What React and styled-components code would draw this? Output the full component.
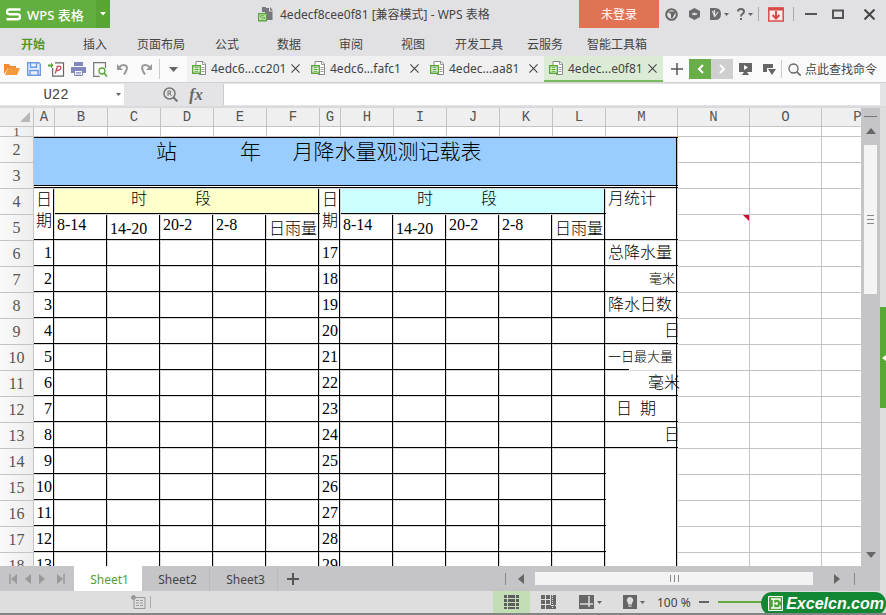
import React from "react";
import styled, { createGlobalStyle, css } from "styled-components";

const UI_FONT = `"Noto Sans", "Noto Sans CJK SC", sans-serif`;
const CELL_FONT = `"Liberation Serif", "Noto Sans CJK SC", serif`;
const MONO_FONT = `"Liberation Mono", monospace`;

const GlobalStyle = createGlobalStyle`
    * {
        box-sizing: border-box;
    }
    body {
        margin: 0;
        overflow: hidden;
        font-family: ${UI_FONT};
        font-size: 12px;
        color: #444;
    }
    button, input {
        margin: 0;
        padding: 0;
        border: 0;
        font: inherit;
        color: inherit;
        background: none;
    }
    svg {
        display: block;
        flex: none;
    }
`;

const Window = styled.div`
    position: relative;
    display: flex;
    flex-direction: column;
    height: 100vh;
    overflow: hidden;
    background: #e1e1e3;
    border-bottom: 2px solid #858585;
`;

const IconButton = styled.button`
    display: flex;
    align-items: center;
    justify-content: center;
    gap: 3px;
    flex: none;
    width: ${({ $width }) => $width || 22}px;
    height: ${({ $height }) => $height || 22}px;
    color: #666;
`;

const Separator = styled.span`
    flex: none;
    width: 1px;
    height: ${({ $height }) => $height || 14}px;
    margin: 0 ${({ $space }) => $space || 0}px;
    background: ${({ $color }) => $color || "#aaa"};
`;

/* title bar */

const TitleBar = styled.header`
    display: flex;
    align-items: center;
    flex: none;
    height: 28px;
`;

const AppButton = styled.button`
    display: flex;
    align-items: center;
    gap: 6px;
    width: 96px;
    height: 28px;
    padding-left: 6px;
    background: #62ae3e;
    color: #fff;
    font-size: 13px;
    font-weight: 500;
    white-space: nowrap;
`;

const AppMenuButton = styled(AppButton)`
    justify-content: center;
    width: 14px;
    padding: 0;
    background: #58a535;
`;

const DocumentTitle = styled.h1`
    display: flex;
    align-items: center;
    gap: 7px;
    flex: 1;
    margin: 0;
    padding-left: 148px;
    font-size: 12px;
    font-weight: 400;
    white-space: nowrap;
`;

const LoginButton = styled.button`
    width: 80px;
    height: 28px;
    background: #e07354;
    color: #fff;
`;

const WindowTools = styled.div`
    display: flex;
    align-items: center;
    width: 227px;
`;

/* ribbon menu */

const Menu = styled.nav`
    display: flex;
    flex: none;
    height: 28px;
    padding: 0 2px;
`;

const MenuItem = styled.button`
    min-width: 62px;
    height: 32px;
    padding: 0 11px;
    white-space: nowrap;
    color: ${({ $active }) => ($active ? "#4c9a2a" : "#444")};
    font-weight: ${({ $active }) => ($active ? 700 : 400)};
`;

/* quick access and file tabs */

const Toolbar = styled.div`
    display: flex;
    align-items: center;
    flex: none;
    height: 26px;
    background: #fafafa;
`;

const QuickAccess = styled.div`
    display: flex;
    align-items: center;
    flex: none;
    width: 187px;
    padding-left: 1px;
`;

const FileTabs = styled.div`
    display: flex;
    flex: 1;
    min-width: 0;
    height: 26px;
`;

const FileTab = styled.div`
    display: flex;
    align-items: center;
    flex: 1;
    min-width: 0;
    padding: 0 5px;
    background: ${({ $active }) => ($active ? "#dcebd6" : "#f0f0f0")};
    border-bottom: 2px solid ${({ $active }) => ($active ? "#7ab861" : "#f0f0f0")};
`;

const FileTabName = styled.button`
    display: flex;
    align-items: center;
    gap: 4px;
    flex: 1;
    min-width: 0;
    white-space: nowrap;
`;

const CloseTab = styled.button`
    flex: none;
    width: 10px;
    height: 14px;
`;

const TabTools = styled.div`
    display: flex;
    align-items: center;
    flex: none;
    width: 223px;
    padding-left: 2px;
`;

const ScrollTabs = styled.button`
    display: flex;
    align-items: center;
    justify-content: center;
    width: 22px;
    height: 20px;
    background: ${({ $active }) => ($active ? "#68ae49" : "#cfcfcf")};
`;

const FindCommand = styled.button`
    display: flex;
    align-items: center;
    gap: 4px;
    margin-left: 6px;
    white-space: nowrap;
`;

/* formula bar */

const FormulaBar = styled.div`
    display: flex;
    align-items: center;
    flex: none;
    height: 26px;
    padding-right: 6px;
    background: #e4e4e6;
    border-top: 1px solid #d2d2d4;
    border-bottom: 2px solid #dadadc;
`;

const NameBox = styled.div`
    display: flex;
    align-items: center;
    width: 124px;
    height: 21px;
    background: #fff;
`;

const NameInput = styled.input`
    flex: 1;
    min-width: 0;
    text-align: center;
    font-family: ${MONO_FONT};
    font-size: 14px;
`;

const FormulaTools = styled.div`
    display: flex;
    align-items: center;
    justify-content: flex-end;
    gap: 4px;
    width: 99px;
    padding-right: 16px;
`;

const FormulaInput = styled.input`
    flex: 1;
    min-width: 0;
    height: 21px;
    padding: 0 6px;
    background: #fff;
    border-left: 1px solid #ccc;
`;

/* sheet */

const Workspace = styled.main`
    display: flex;
    flex: 1;
    min-height: 0;
`;

const SheetViewport = styled.div`
    flex: 1;
    min-width: 0;
    overflow: hidden;
    background: #fff;
`;

const Sheet = styled.table`
    table-layout: fixed;
    width: 894px;
    border-collapse: separate;
    border-spacing: 0;
    font-family: ${CELL_FONT};
    color: #000;
`;

const Row = styled.tr`
    height: ${({ $height }) => $height || 26}px;
`;

const header = css`
    padding: 0;
    overflow: hidden;
    font-weight: 400;
    color: #555;
    border-right: 1px solid #c4c4c4;
    border-bottom: 1px solid #c4c4c4;
`;

const ColumnHeader = styled.th`
    ${header}
    background: #efefef;
    font-family: ${MONO_FONT};
    font-size: 14px;
    line-height: 16px;
`;

const RowHeader = styled.th`
    ${header}
    background: linear-gradient(to right, #fafafa, #ededed);
    font-size: ${({ $short }) => ($short ? 13 : 16)}px;
    line-height: ${({ $short }) => ($short ? 9 : 25)}px;
`;

const Cell = styled.td`
    position: relative;
    padding: 0;
    border-right: 1px solid #c4c4c4;
    border-bottom: 1px solid #c4c4c4;
`;

const black = "linear-gradient(#000, #000)";
const grey = "linear-gradient(#d8d8d8, #d8d8d8)";

/* table cells carry a black rule just inside the grid line */
const RuledCell = styled.td`
    padding: 0 3px 2px 2px;
    background:
        ${black} right 1px top / 1px 100% no-repeat,
        ${black} left bottom 1px / ${({ $rule }) => $rule || "100%"} 1px no-repeat,
        ${grey} right top / 1px 100% no-repeat,
        ${grey} left bottom / 100% 1px no-repeat,
        ${({ $fill }) => $fill || "#fff"};
    font-size: ${({ $size }) => $size || 16}px;
    font-weight: 300;
    line-height: 20px;
    white-space: pre;
    text-align: ${({ $align }) => $align || "left"};
    vertical-align: ${({ $valign }) => $valign || "middle"};
`;

const TitleCell = styled(RuledCell)`
    line-height: 30px;
    box-shadow: inset 0 1px 0 #000;
    background:
        ${black} right 1px top / 1px 100% no-repeat,
        ${black} left bottom 1px / 100% 1px no-repeat,
        linear-gradient(#fff, #fff) left bottom 2px / 100% 1px no-repeat,
        ${black} left bottom 3px / 100% 1px no-repeat,
        linear-gradient(#d8d8d8, #d8d8d8) left bottom / 100% 1px no-repeat,
        #99ccff;
`;

const DateCell = styled(RuledCell)`
    line-height: 21px;
    white-space: normal;
    word-break: break-all;
`;

const CommentMark = styled.span`
    position: absolute;
    top: 0;
    right: 0;
    border-top: 6px solid #c8102e;
    border-left: 6px solid transparent;
`;

const Corner = styled.span`
    display: block;
    width: 0;
    margin-left: 20px;
    border-bottom: 10px solid #b8b8b8;
    border-left: 10px solid transparent;
`;

const VerticalScroll = styled.div`
    display: flex;
    flex-direction: column;
    align-items: center;
    flex: none;
    width: 19px;
    padding: 8px 0 0;
    background: #c5c5c7;
`;

const SplitHandle = styled.span`
    flex: none;
    width: 13px;
    height: 1px;
    background: #777;
`;

const ScrollSpace = styled.div`
    flex: 1;
    width: 13px;
`;

const VerticalThumb = styled.div`
    display: flex;
    flex-direction: column;
    align-items: center;
    justify-content: center;
    gap: 3px;
    width: 13px;
    height: 33%;
    min-height: 40px;
    background: #f4f4f4;
`;

const Grip = styled.span`
    width: ${({ $vertical }) => ($vertical ? 1 : 7)}px;
    height: ${({ $vertical }) => ($vertical ? 7 : 1)}px;
    background: #888;
`;

const SidePane = styled.div`
    display: flex;
    flex-direction: column;
    justify-content: center;
    flex: none;
    width: 6px;
    padding-top: 41px;
    background: #dededf;
`;

const SidePaneButton = styled.button`
    display: flex;
    align-items: center;
    justify-content: flex-end;
    width: 6px;
    height: 101px;
    background: #59a735;
`;

/* sheet tabs */

const SheetBar = styled.div`
    display: flex;
    align-items: center;
    flex: none;
    height: 25px;
    padding-right: 19px;
    background: #c5c5c7;
    border-right: 6px solid #dededf;
`;

const SheetNav = styled.div`
    display: flex;
    align-items: center;
    width: 74px;
    padding-left: 4px;
`;

const SheetTab = styled.button`
    width: 68px;
    height: 25px;
    padding: 2px 0 0 4px;
    background: ${({ $active }) => ($active ? "#fff" : "transparent")};
    color: ${({ $active }) => ($active ? "#55a02f" : "#444")};
    border-right: 1px solid ${({ $active }) => ($active ? "#fff" : "#b9b9bb")};
`;

const HorizontalScroll = styled.div`
    display: flex;
    align-items: center;
    flex: 1;
    min-width: 0;
    margin-left: 197px;
`;

const HorizontalThumb = styled.div`
    display: flex;
    align-items: center;
    justify-content: center;
    gap: 3px;
    flex: 1;
    height: 13px;
    margin-right: 13px;
    background: #f3f3f3;
`;

/* status bar */

const StatusBar = styled.footer`
    display: flex;
    align-items: center;
    flex: none;
    height: 22px;
    background: #dededf;
`;

const StatusInfo = styled.div`
    display: flex;
    align-items: center;
    gap: 4px;
    flex: 1;
    padding-left: 131px;
`;

const ViewButton = styled(IconButton)`
    background: ${({ $active }) => ($active ? "#c3deb5" : "transparent")};
`;

const ZoomLabel = styled.span`
    width: 42px;
    padding-left: 2px;
    white-space: nowrap;
`;

const ZoomSlider = styled.input`
    appearance: none;
    width: 112px;
    height: 2px;
    margin: 0 56px 0 7px;
    background: #62a83c;

    &::-webkit-slider-thumb {
        appearance: none;
        width: 7px;
        height: 12px;
        background: #666;
    }
`;

const SiteBadge = styled.a`
    position: absolute;
    right: 0;
    bottom: -2px;
    display: flex;
    align-items: center;
    gap: 3px;
    height: 23px;
    padding: 0 2px 0 7px;
    border-radius: 11px;
    background: #128733;
    color: #fff;
    font-family: "Liberation Sans", sans-serif;
    font-size: 16px;
    font-weight: 700;
    font-style: italic;
    text-decoration: none;
`;

const Caret = ({ color = "#666", size = 5 }) => (
    <svg width={size} height={(size + 1) / 2} viewBox="0 0 10 6" preserveAspectRatio="none">
        <path d="M0 0h10L5 6z" fill={color} />
    </svg>
);

const Triangle = ({ dir, color = "#666", bar }) => (
    <svg width="10" height="10" viewBox="0 0 10 10">
        <g transform={`rotate(${{ right: 0, down: 90, left: 180, up: 270 }[dir]} 5 5)`}>
            <path d={bar ? "M1 0l6 5-6 5z" : "M2 0l6 5-6 5z"} fill={color} />
            {bar && <path d="M8 0v10" stroke={color} strokeWidth="1.5" />}
        </g>
    </svg>
);

const Cross = ({ size = 9, width = 1.2 }) => (
    <svg width={size} height={size} viewBox="0 0 10 10">
        <path d="M.5.5l9 9M9.5.5l-9 9" stroke="#444" strokeWidth={width} />
    </svg>
);

const Plus = ({ width = 1.5 }) => (
    <svg width="12" height="12" viewBox="0 0 12 12">
        <path d="M6 0v12M0 6h12" stroke="#555" strokeWidth={width} />
    </svg>
);

const FileIcon = () => (
    <svg width="15" height="14" viewBox="0 0 15 14" fill="none">
        <path d="M4 4V.5h7L13.500 3v10.500H7" fill="#fff" stroke="#888" />
        <path d="M10.500 1v2.500h3M7 4.500h2M9.500 6.500h3M9.500 8.500h3M9.500 10.500h3" stroke="#999" />
        <path d="M.7 4.700h7.600v7.600H.7z" fill="#f2faee" stroke="#5aa63a" strokeWidth="1.400" />
        <path d="M2.500 6.700h4M2.500 8.500h4M2.500 10.300h4" stroke="#5aa63a" />
    </svg>
);

const BookIcon = () => (
    <svg width="15" height="15" viewBox="0 0 15 15" fill="none">
        <path d="M4 0h4v4h3v9H9V5H4z" fill="#77777b" />
        <path d="M7 1h4v3.500h3.500V13H9V6H7z" fill="#77777b" />
        <path d="M12 0l3 3.500h-3z" fill="#77777b" />
        <path d="M.7 6.700h7.600v7H.7z" fill="#eef7ea" stroke="#5aa63a" strokeWidth="1.400" />
        <path d="M6.500 8.700h-4v1.500h4v1.700h-4" stroke="#5aa63a" />
    </svg>
);

const WpsLogo = () => (
    <svg width="15" height="13" viewBox="0 0 15 13" fill="none">
        <path
            d="M14.500 1.500H3.500Q1 1.500 1 3.800T3.500 6.200h8Q14 6.200 14 8.700t-2.500 2.500H.5"
            stroke="#fff"
            strokeWidth="2.400"
        />
    </svg>
);

const OpenIcon = () => (
    <svg width="16" height="12" viewBox="0 0 16 12">
        <path d="M0 11V1h5l1.500 2H12v2H4z" fill="#ef8b35" />
        <path d="M4 5h12l-3 7H1z" fill="#f59a3c" />
    </svg>
);

const SaveIcon = () => (
    <svg width="14" height="14" viewBox="0 0 14 14" fill="none" stroke="#6d9be0" strokeWidth="1.400">
        <path d="M.7.7h11l1.600 1.600v11H.7z" fill="#e9f1fd" />
        <path d="M3.500.7v4.500h6V.7M3 13V8.500h8V13" />
    </svg>
);

const PdfIcon = () => (
    <svg width="17" height="15" viewBox="0 0 17 15" fill="none">
        <path d="M7 .8h8.500v13.400H4.700V6" fill="#fff" stroke="#666" strokeWidth="1.200" />
        <path d="M7.300 11.500l2-7q3.700-1 3.500 1.500T8.700 8.500" stroke="#c44a5c" strokeWidth="1.300" />
        <path d="M0 2.500h3V.500l2.500 3-2.500 3v-2H0z" fill="#5aa63a" />
    </svg>
);

const PrintIcon = () => (
    <svg width="15" height="14" viewBox="0 0 15 14">
        <path d="M3 0h9v4H3z" fill="#8388bb" />
        <path d="M0 5h15v6H0z" fill="#8388bb" />
        <path d="M3.500 8.500h8v5h-8z" fill="#f4f4fb" stroke="#8388bb" />
        <path d="M5 10.500h5M5 12h5" stroke="#8388bb" strokeWidth=".8" />
    </svg>
);

const PreviewIcon = () => (
    <svg width="15" height="15" viewBox="0 0 15 15" fill="none">
        <path d="M12.500 6V.700H.700v13.600h6" stroke="#777" strokeWidth="1.200" />
        <circle cx="9" cy="9" r="3" fill="#fff" stroke="#5aa63a" strokeWidth="1.300" />
        <path d="M11 11l3 3.500" stroke="#5aa63a" strokeWidth="1.600" />
    </svg>
);

const UndoIcon = ({ flip }) => (
    <svg width="12" height="12" viewBox="0 0 12 12" fill="none">
        <g transform={flip ? "translate(12 0) scale(-1 1)" : undefined} stroke="#999" strokeWidth="2">
            <path d="M2 4.500Q5 1 8.500 2.500T7 11.500" />
            <path d="M0 1v6h6z" fill="#999" stroke="none" />
        </g>
    </svg>
);

const SkinIcon = () => (
    <svg width="13" height="13" viewBox="0 0 13 13">
        <circle cx="6.500" cy="6.500" r="5.300" fill="#e1e1e3" stroke="#666" strokeWidth="2" />
        <path d="M2 3.500h9L7.500 10H6V6z" fill="#666" />
    </svg>
);

const CubeIcon = () => (
    <svg width="11" height="12" viewBox="0 0 11 12">
        <path d="M5.500 0L11 3v6l-5.500 3L0 9V3z" fill="#6b6b6d" />
        <path d="M3 6h5M5.500 4.700v2.600" stroke="#e1e1e3" strokeWidth="1.500" />
    </svg>
);

const DocerIcon = () => (
    <svg width="11" height="12" viewBox="0 0 11 12">
        <path d="M0 0h5q6 0 6 6t-6 6H0z" fill="#6b6b6d" />
        <path d="M2.500 3l2 5V2M4.500 9L8 4" stroke="#e1e1e3" fill="none" strokeWidth="1.200" />
    </svg>
);

const HelpIcon = () => (
    <svg width="8" height="12" viewBox="0 0 8 12" fill="none" stroke="#666" strokeWidth="2">
        <path d="M1 3.500Q1 1 4 1t3 2.500Q7 5 5.500 5.800T4 8.500" />
        <path d="M4 10v2" />
    </svg>
);

const DownloadIcon = () => (
    <svg width="16" height="15" viewBox="0 0 16 15" fill="none" stroke="#d94b4b">
        <path d="M.800 1h14.400v13H.800z" fill="#fbecec" strokeWidth="1.500" />
        <path d="M1 2h14" strokeWidth="3" />
        <path d="M8 4v7M4.500 8L8 11.500 11.500 8" strokeWidth="2" />
    </svg>
);

const PresentIcon = () => (
    <svg width="13" height="12" viewBox="0 0 13 12">
        <path d="M0 0h13v9H8l2 3H3l2-3H0z" fill="#666" />
        <path d="M5 2l4 2.500L5 7z" fill="#fff" />
    </svg>
);

const WindowsIcon = () => (
    <svg width="13" height="11" viewBox="0 0 13 11">
        <path d="M0 0h10v4H4v4H0z" fill="#666" />
        <path d="M5 5h8L9 11z" fill="#666" />
    </svg>
);

const SearchIcon = () => (
    <svg width="13" height="13" viewBox="0 0 13 13" fill="none" stroke="#666">
        <circle cx="5.500" cy="5.500" r="4.500" strokeWidth="1.300" />
        <path d="M8.700 8.700l4 4" strokeWidth="1.600" />
    </svg>
);

const LookupIcon = () => (
    <svg width="15" height="15" viewBox="0 0 15 15" fill="none" stroke="#777">
        <circle cx="6.500" cy="6.500" r="5.500" strokeWidth="1.500" />
        <path d="M10.500 10.500l4 4" strokeWidth="2.200" />
        <path d="M5 9V4h2.500v2.500H5M6.500 6.500L8.500 9" />
    </svg>
);

const FxIcon = styled.span`
    font-family: "Liberation Serif", serif;
    font-size: 16px;
    font-style: italic;
    font-weight: 700;
    line-height: 16px;
    color: #666;
`;

const Chevron = ({ left }) => (
    <svg width="7" height="10" viewBox="0 0 7 10" fill="none" stroke="#fff" strokeWidth="2">
        <path d={left ? "M6 1L2 5l4 4" : "M1 1l4 4-4 4"} />
    </svg>
);

const RecordIcon = () => (
    <svg width="15" height="14" viewBox="0 0 15 14" fill="none" stroke="#999">
        <path d="M5 2.500h9v11H3V5" />
        <path d="M5 5.500h3M9 5.500h3M5 8h3M9 8h3M5 10.500h3M9 10.500h3" />
        <circle cx="2.500" cy="2.500" r="2" fill="#999" />
    </svg>
);

const NormalViewIcon = () => (
    <svg width="15" height="14" viewBox="0 0 15 14">
        <path d="M0 0h15v14H0z" fill="#5e5e60" />
        <path d="M0 3.500h15M0 7.500h15M0 11.500h15M3.500 0v14M11.500 0v14" stroke="#c3deb5" />
    </svg>
);

const PageViewIcon = () => (
    <svg width="15" height="14" viewBox="0 0 15 14">
        <path d="M0 0h15v14H0z" fill="#666" />
        <path d="M0 4.500h10M0 9.500h10M4.500 0v14M9.500 0v10" stroke="#dededf" />
        <path d="M10 10.500h5M11.500 0v14" stroke="#dededf" strokeDasharray="1 1" />
    </svg>
);

const LayoutIcon = () => (
    <svg width="15" height="14" viewBox="0 0 15 14">
        <path d="M0 0h15v14H0z" fill="#666" />
        <path d="M1 9h13M10 1v11" stroke="#dededf" strokeWidth="1.500" />
    </svg>
);

const BulbIcon = () => (
    <svg width="14" height="14" viewBox="0 0 14 14">
        <path d="M0 0h14v14H0z" fill="#666" />
        <path d="M5 8Q3 6 4 4t3-2 3 2-1 4v1.500H5zM5.500 10.500h3v1.200h-3z" fill="#dededf" />
    </svg>
);

const BadgeLogo = () => (
    <svg width="15" height="15" viewBox="0 0 15 15" fill="none" stroke="#fff">
        <path d="M.500.500h14v14H.500z" fill="#4fa33a" />
        <path d="M3 3h9v2.500M3 12h9V9.500M5.500 3v9M5.500 7.500H9M9 6v3" strokeWidth="1.400" />
    </svg>
);

const menus = [
    "开始",
    "插入",
    "页面布局",
    "公式",
    "数据",
    "审阅",
    "视图",
    "开发工具",
    "云服务",
    "智能工具箱"
];

const files = ["4edc6...cc201", "4edc6...fafc1", "4edec...aa81", "4edec...e0f81"];

const columns = "ABCDEFGHIJKLMNOP".split("");

const columnWidth = name => {
    if (name === "A" || name === "G") return 21;
    return name >= "M" ? 72 : 53;
};

const periods = [
    { text: "8-14" },
    { text: "14-20", valign: "bottom" },
    { text: "20-2" },
    { text: "2-8" },
    { text: "日雨量", valign: "bottom" }
];

const summary = {
    6: { text: "总降水量" },
    7: { text: "毫米", size: 13, align: "right" },
    8: { text: "降水日数" },
    9: { text: "\u3000\u3000\u3000\u2002日" },
    10: { text: "一日最大量", size: 13, rule: "23px" },
    11: { text: "\u3000\u3000\u2002毫米" },
    12: { text: "\u2002日\u2002期" },
    13: { text: "\u3000\u3000\u3000\u2002日" }
};

const firstDataRow = 6;
const lastDataRow = 18;
const dataRows = Array.from(
    { length: lastDataRow - firstDataRow + 1 },
    (_, index) => firstDataRow + index
);

const FreeCells = ({ comment }) => (
    <>
        <Cell>{comment && <CommentMark />}</Cell>
        <Cell />
        <Cell />
    </>
);

const NumberedRow = ({ number, height, children }) => (
    <Row $height={height}>
        <RowHeader scope="row" $short={Boolean(height)}>{number}</RowHeader>
        {children}
    </Row>
);

const EmptyCells = () => [0, 1, 2, 3, 4].map(index => <RuledCell key={index} />);

const PeriodCells = () =>
    periods.map(({ text, valign }) => (
        <RuledCell key={text} $valign={valign || "top"}>
            {text}
        </RuledCell>
    ));

const SummaryCell = ({ row }) => {
    if (row > 14) return null;
    if (row === 14) return <RuledCell rowSpan={lastDataRow - 13} />;
    const { text, size, align, rule } = summary[row];
    return (
        <RuledCell $size={size} $align={align} $rule={rule}>
            {text}
        </RuledCell>
    );
};

const RainSheet = () => (
    <Sheet>
        <colgroup>
            <col style={{ width: 34 }} />
            {columns.map(name => (
                <col key={name} style={{ width: columnWidth(name) }} />
            ))}
        </colgroup>
        <thead>
            <Row $height={19}>
                <ColumnHeader>
                    <Corner />
                </ColumnHeader>
                {columns.map(name => (
                    <ColumnHeader key={name} scope="col">
                        {name}
                    </ColumnHeader>
                ))}
            </Row>
        </thead>
        <tbody>
            <NumberedRow number={1} height={10}>
                {columns.map(name => (
                    <Cell key={name} />
                ))}
            </NumberedRow>
            <NumberedRow number={2}>
                <TitleCell colSpan={13} rowSpan={2} $size={21} $align="center" $valign="top">
                    {"站\u3000\u3000\u3000年\u3000\u2002月降水量观测记载表\u3000\u3000\u3000\u2002"}
                </TitleCell>
                <FreeCells />
            </NumberedRow>
            <NumberedRow number={3}>
                <FreeCells />
            </NumberedRow>
            <NumberedRow number={4}>
                <DateCell rowSpan={2} $valign="top">日期</DateCell>
                <RuledCell colSpan={5} $fill="#ffffcc" $align="center" $valign="top">
                    {"时\u3000\u3000\u3000段\u3000\u3000"}
                </RuledCell>
                <DateCell rowSpan={2} $valign="top">日期</DateCell>
                <RuledCell colSpan={5} $fill="#ccffff" $align="center" $valign="top">
                    {"时\u3000\u3000\u3000段\u3000\u3000"}
                </RuledCell>
                <RuledCell rowSpan={2} $valign="top">月统计</RuledCell>
                <FreeCells />
            </NumberedRow>
            <NumberedRow number={5}>
                <PeriodCells />
                <PeriodCells />
                <FreeCells comment />
            </NumberedRow>
            {dataRows.map(row => (
                <NumberedRow key={row} number={row}>
                    <RuledCell $align="right">{row - 5}</RuledCell>
                    <EmptyCells />
                    <RuledCell $align="right">{row + 11}</RuledCell>
                    <EmptyCells />
                    <SummaryCell row={row} />
                    <FreeCells />
                </NumberedRow>
            ))}
        </tbody>
    </Sheet>
);

const App = () => (
    <Window>
        <GlobalStyle />
        <TitleBar>
            <AppButton>
                <WpsLogo />
                WPS 表格
            </AppButton>
            <AppMenuButton aria-label="Menu">
                <Caret color="#fff" size={6} />
            </AppMenuButton>
            <DocumentTitle>
                <BookIcon />
                4edecf8cee0f81 [兼容模式] - WPS 表格
            </DocumentTitle>
            <LoginButton>未登录</LoginButton>
            <WindowTools>
                <IconButton $width={24} aria-label="Skin"><SkinIcon /></IconButton>
                <IconButton $width={23} aria-label="Cloud"><CubeIcon /></IconButton>
                <IconButton $width={26} aria-label="Docer"><DocerIcon /><Caret /></IconButton>
                <IconButton $width={26} aria-label="Help"><HelpIcon /><Caret /></IconButton>
                <Separator />
                <IconButton $width={34} aria-label="Update"><DownloadIcon /></IconButton>
                <Separator />
                <IconButton $width={33} aria-label="Minimize">
                    <svg width="12" height="2"><path d="M0 1h12" stroke="#555" strokeWidth="2" /></svg>
                </IconButton>
                <IconButton $width={22} aria-label="Maximize">
                    <svg width="12" height="10" fill="none">
                        <path d="M1 1.500h10v7.500H1z" stroke="#555" strokeWidth="2" />
                    </svg>
                </IconButton>
                <IconButton $width={40} aria-label="Close"><Cross size={11} width={1.8} /></IconButton>
            </WindowTools>
        </TitleBar>
        <Menu>
            {menus.map((name, index) => (
                <MenuItem key={name} $active={index === 0}>{name}</MenuItem>
            ))}
        </Menu>
        <Toolbar>
            <QuickAccess>
                <IconButton aria-label="Open"><OpenIcon /></IconButton>
                <IconButton aria-label="Save"><SaveIcon /></IconButton>
                <IconButton aria-label="Export PDF"><PdfIcon /></IconButton>
                <IconButton aria-label="Print"><PrintIcon /></IconButton>
                <IconButton aria-label="Preview"><PreviewIcon /></IconButton>
                <IconButton $width={24} aria-label="Undo"><UndoIcon /></IconButton>
                <IconButton aria-label="Redo"><UndoIcon flip /></IconButton>
                <Separator $height={20} $space={2} $color="#ccc" />
                <IconButton aria-label="More"><Caret size={9} /></IconButton>
            </QuickAccess>
            <FileTabs>
                {files.map((name, index) => (
                    <FileTab key={name} $active={index === files.length - 1}>
                        <FileTabName><FileIcon />{name}</FileTabName>
                        <CloseTab aria-label={`Close ${name}`}><Cross /></CloseTab>
                    </FileTab>
                ))}
            </FileTabs>
            <TabTools>
                <IconButton $width={24} aria-label="New file"><Plus /></IconButton>
                <ScrollTabs $active aria-label="Previous"><Chevron left /></ScrollTabs>
                <ScrollTabs aria-label="Next"><Chevron /></ScrollTabs>
                <IconButton $width={24} aria-label="Present"><PresentIcon /></IconButton>
                <IconButton $width={24} aria-label="Windows"><WindowsIcon /></IconButton>
                <Separator $height={18} $color="#ccc" />
                <FindCommand><SearchIcon />点此查找命令</FindCommand>
            </TabTools>
        </Toolbar>
        <FormulaBar>
            <NameBox>
                <NameInput aria-label="Name box" defaultValue="U22" />
                <IconButton $width={12} aria-label="Names"><Caret /></IconButton>
            </NameBox>
            <FormulaTools>
                <IconButton aria-label="Lookup"><LookupIcon /></IconButton>
                <IconButton aria-label="Insert function"><FxIcon>fx</FxIcon></IconButton>
            </FormulaTools>
            <FormulaInput aria-label="Formula" />
        </FormulaBar>
        <Workspace>
            <SheetViewport>
                <RainSheet />
            </SheetViewport>
            <VerticalScroll>
                <SplitHandle />
                <IconButton $width={19} $height={28} aria-label="Scroll up"><Triangle dir="up" /></IconButton>
                <VerticalThumb><Grip /><Grip /><Grip /></VerticalThumb>
                <ScrollSpace />
                <IconButton $width={19} aria-label="Scroll down"><Triangle dir="down" /></IconButton>
            </VerticalScroll>
            <SidePane>
                <SidePaneButton aria-label="Task pane">
                    <svg width="4" height="6"><path d="M4 0v6L0 3z" fill="#fff" /></svg>
                </SidePaneButton>
            </SidePane>
        </Workspace>
        <SheetBar>
            <SheetNav>
                <IconButton $width={17} aria-label="First sheet"><Triangle dir="left" bar color="#999" /></IconButton>
                <IconButton $width={14} aria-label="Previous sheet"><Triangle dir="left" color="#999" /></IconButton>
                <IconButton $width={14} aria-label="Next sheet"><Triangle dir="right" color="#999" /></IconButton>
                <IconButton $width={23} aria-label="Last sheet"><Triangle dir="right" bar color="#999" /></IconButton>
            </SheetNav>
            <SheetTab $active>Sheet1</SheetTab>
            <SheetTab>Sheet2</SheetTab>
            <SheetTab>Sheet3</SheetTab>
            <IconButton $width={30} aria-label="Add sheet"><Plus width={2} /></IconButton>
            <HorizontalScroll>
                <Separator $height={12} $color="#888" />
                <IconButton $width={29} aria-label="Scroll left"><Triangle dir="left" /></IconButton>
                <HorizontalThumb><Grip $vertical /><Grip $vertical /><Grip $vertical /></HorizontalThumb>
                <IconButton aria-label="Scroll right"><Triangle dir="right" /></IconButton>
                <Separator $height={12} $color="#888" $space={6} />
            </HorizontalScroll>
        </SheetBar>
        <StatusBar>
            <StatusInfo>
                <RecordIcon />
                <Separator $height={12} />
            </StatusInfo>
            <ViewButton $active $width={37} aria-label="Normal view"><NormalViewIcon /></ViewButton>
            <ViewButton $width={37} aria-label="Page break view"><PageViewIcon /></ViewButton>
            <ViewButton $width={46} aria-label="Reading layout"><LayoutIcon /><Caret /></ViewButton>
            <ViewButton $width={42} aria-label="Eye protection"><BulbIcon /><Caret /></ViewButton>
            <ZoomLabel>100 %</ZoomLabel>
            <IconButton $width={14} aria-label="Zoom out">
                <svg width="10" height="2"><path d="M0 1h10" stroke="#666" strokeWidth="2" /></svg>
            </IconButton>
            <ZoomSlider type="range" aria-label="Zoom" min="10" max="190" defaultValue="100" />
        </StatusBar>
        <SiteBadge href="#excelcn">
            <BadgeLogo />
            Excelcn.com
        </SiteBadge>
    </Window>
);

export default App;
